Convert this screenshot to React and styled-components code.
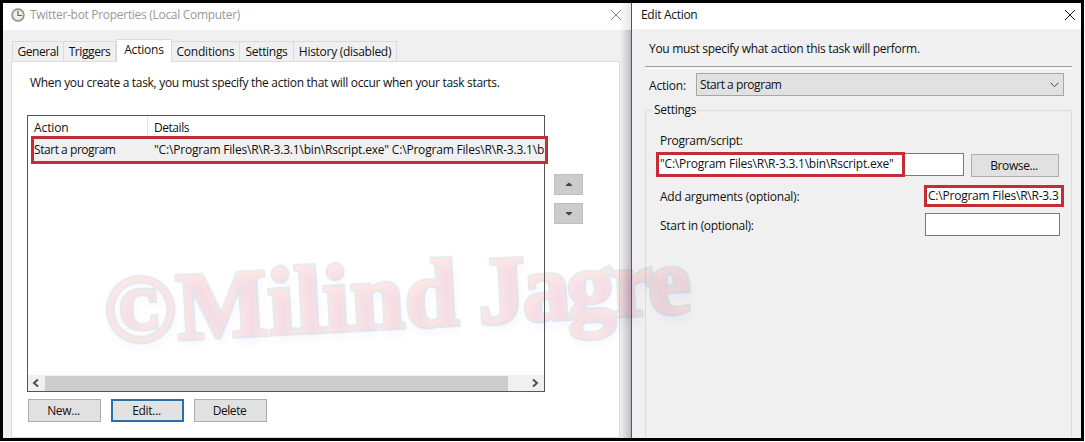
import React from "react";
import styled, { createGlobalStyle } from "styled-components";

const Global = createGlobalStyle`
  * { box-sizing: border-box; }
  body { margin: 0; background: #fff; overflow: hidden; }
`;

const Frame = styled.div`
  position: relative;
  display: flex;
  width: 1084px;
  height: 441px;
  border: 3px solid #000;
  background: #f0f0f0;
  font: 12px/16px "Open Sans", "Noto Sans", sans-serif;
  color: #111;
  overflow: hidden;
`;

const Text = styled.span`
  white-space: pre;
  letter-spacing: ${(p) => p.$track || -0.3}px;
  color: ${(p) => p.$color || "inherit"};
`;

const PropertiesWindow = styled.section`
  width: 628px;
  display: flex;
  flex-direction: column;
  background: linear-gradient(90deg, #f0f0f0 617px, #e4e4e5 620px, #bdbbc0 628px);
`;

const TitleBar = styled.header`
  display: flex;
  align-items: center;
  flex: none;
  height: ${(p) => p.$height}px;
  padding: ${(p) => p.$padding};
  background: ${(p) => p.$background || "#fff"};
  svg:last-child { margin-left: auto; }
`;

const ClockSvg = styled.svg`
  margin-right: 5px;
`;

const TabStrip = styled.nav`
  display: flex;
  align-items: flex-end;
  height: 31px;
  padding-left: 9px;
`;

const Tab = styled.div`
  display: flex;
  justify-content: center;
  align-items: center;
  width: ${(p) => p.$width}px;
  height: ${(p) => (p.$active ? 23 : 20)}px;
  margin-bottom: ${(p) => (p.$active ? -1 : 0)}px;
  padding-bottom: ${(p) => (p.$active ? 2 : 0)}px;
  padding-top: ${(p) => (p.$active ? 0 : 1)}px;
  border: 1px solid #dadada;
  border-left-width: ${(p) => (p.$first || p.$active ? 1 : 0)}px;
  border-bottom: 0;
  background: ${(p) => (p.$active ? "#fff" : "#f0f0f0")};
  z-index: ${(p) => (p.$active ? 1 : 0)};
`;

const TabPage = styled.main`
  display: flex;
  flex: none;
  flex-direction: column;
  width: 609px;
  height: 377px;
  margin-left: 8px;
  padding: 13px 0 0 16px;
  border: 1px solid #dcdcdc;
  background: #fff;
`;

const Intro = styled.p`
  margin: 0 0 24px;
  padding-left: 2px;
  height: 16px;
`;

const ListArea = styled.div`
  display: flex;
  gap: 9px;
  margin-left: -1px;
`;

const ListBox = styled.div`
  display: flex;
  flex-direction: column;
  width: 518px;
  height: 277px;
  border: 1px solid #55555a;
`;

const HeaderRow = styled.div`
  display: flex;
  height: 20px;
  padding-left: 6px;
  line-height: 24px;
`;

const HeaderCell = styled.div`
  width: ${(p) => p.$width}px;
  border-right: ${(p) => (p.$divided ? "1px solid #e2e2e2" : "0")};
  padding-left: ${(p) => p.$pad || 0}px;
`;

const ListRow = styled.div`
  display: flex;
  flex: none;
  align-items: center;
  width: 517px;
  height: 28px;
  margin-left: 3px;
  border: 3px solid #c42d36;
  background: #f0f0f0;
  overflow: hidden;
`;

const RowCell = styled.div`
  flex: none;
  width: ${(p) => p.$width}px;
  overflow: hidden;
  height: 18px;
  line-height: 18px;
`;

const ScrollBar = styled.div`
  display: flex;
  align-items: center;
  justify-content: space-between;
  height: 16px;
  margin-top: auto;
  padding: 0 5px 0 4px;
  background: #f0f0f0;
`;

const Thumb = styled.div`
  width: 463px;
  height: 15px;
  margin-left: -6px;
  background: #cdcdcd;
  & + svg { margin-left: 12px; }
`;

const MoveButtons = styled.div`
  display: flex;
  flex-direction: column;
  gap: 8px;
  padding-top: 59px;
`;

const MoveButton = styled.div`
  display: flex;
  align-items: center;
  justify-content: center;
  width: 29px;
  height: 21px;
  border: 1px solid #bfbfbf;
  background: #ccc;
`;

const ButtonRow = styled.div`
  display: flex;
  gap: 10px;
  padding-top: 7px;
`;

const Button = styled.div`
  display: flex;
  flex: none;
  align-items: center;
  justify-content: center;
  width: ${(p) => p.$width || 73}px;
  height: 23px;
  padding: 1px 2px 0 0;
  border: ${(p) => (p.$focus ? "2px solid #2a6fa8" : "1px solid #adadad")};
  box-shadow: ${(p) => (p.$focus ? "inset 0 0 0 1px #d0ecfa" : "none")};
  background: #e1e1e1;
`;

const EditWindow = styled.section`
  display: flex;
  flex-direction: column;
  flex: 1;
  border-left: 1px solid #64496b;
  box-shadow: inset 2px 0 0 #f8e8f9;
`;

const EditBody = styled.div`
  display: flex;
  flex-direction: column;
  flex: 1;
  padding: 12px 9px 0 13px;
`;

const Prompt = styled.p`
  margin: 0;
  height: 25px;
  padding-left: 4px;
`;

const Rule = styled.div`
  height: 3px;
  border-top: 1px solid #a0a0a0;
  border-bottom: 1px solid #fff;
`;

const ActionRow = styled.div`
  display: flex;
  align-items: center;
  height: 23px;
  margin-top: 4px;
  padding-left: 4px;
`;

const ActionLabel = styled.label`
  width: 47px;
  padding-top: 2px;
`;

const Select = styled.div`
  display: flex;
  align-items: center;
  justify-content: space-between;
  width: 368px;
  height: 23px;
  padding: 1px 4px 0 3px;
  border: 1px solid #a6a6a6;
  background: #e1e1e1;
`;

const Group = styled.fieldset`
  display: flex;
  flex-direction: column;
  flex: 1;
  min-width: 0;
  margin: 6px 0 -4px;
  padding: 0 0 0 10px;
  border: 1px solid #dcdcdc;
  legend { margin-left: -4px; padding: 0 2px; height: 16px; }
`;

const FieldLabel = styled.label`
  height: 16px;
  margin-top: 15px;
  padding-left: 4px;
`;

const ProgramRow = styled.div`
  display: flex;
  align-items: flex-end;
  height: 25px;
  margin-top: 3px;
`;

const Input = styled.div`
  width: ${(p) => p.$width}px;
  height: 23px;
  border: 1px solid #7a7a7a;
  border-left-width: ${(p) => (p.$joined ? 0 : 1)}px;
  margin: ${(p) => (p.$joined ? "0 7px 1px 0" : "0")};
  background: #fff;
`;

const Marked = styled.div`
  display: flex;
  width: ${(p) => p.$width}px;
  height: ${(p) => p.$height}px;
  padding-left: 1px;
  border: 3px solid #c42d36;
  line-height: ${(p) => p.$line}px;
  background: #fff;
  overflow: hidden;
`;

const FieldRow = styled.div`
  display: flex;
  align-items: center;
  justify-content: space-between;
  height: 23px;
  margin-top: ${(p) => p.$top}px;
  padding: 0 ${(p) => p.$right}px 0 4px;
`;

const FieldName = styled.label`
  padding-top: ${(p) => p.$drop}px;
`;

const Watermark = styled.svg`
  position: absolute;
  left: -3px;
  top: -3px;
  pointer-events: none;
`;

const Close = ({ color }) => (
  <svg width="12" height="12" viewBox="0 0 12 12" stroke={color} fill="none">
    <path d="M1 1 11 11M11 1 1 11" />
  </svg>
);

const Clock = () => (
  <ClockSvg width="14" height="14" viewBox="0 0 14 14" fill="none">
    <circle cx="7" cy="7" r="6" fill="#f5f3e4" stroke="#85898b" strokeWidth="1.4" />
    <circle cx="7" cy="7" r="4.5" stroke="#c9cbc5" strokeWidth=".7" />
    <path d="M7 3v4.5h4" stroke="#68634d" strokeWidth="1.2" />
  </ClockSvg>
);

const Chevron = ({ flip }) => (
  <svg width="7" height="10" viewBox="0 0 7 10" fill="none" stroke="#505050" strokeWidth="2">
    <path d={flip ? "M1 1.5 5 5 1 8.5" : "M6 1.5 2 5 6 8.5"} />
  </svg>
);

const Triangle = ({ down }) => (
  <svg width="8" height="5" viewBox="0 0 8 5" fill="#444">
    <path d={down ? "M1 1h6v1L4 4.5 1 2z" : "M4 .5 7 3v1H1V3z"} />
  </svg>
);

const WatermarkText = ({ dx = 0, dy = 0, ...rest }) => (
  <text y={343 + dy} {...rest}>
    <tspan x={106 + dx} textLength="354">©Milind</tspan>
    <tspan x={480 + dx} textLength="213">Jagre</tspan>
  </text>
);

const tabs = [
  ["General", 52, -0.45],
  ["Triggers", 52, -0.4],
  ["Actions", 56, -0.2],
  ["Conditions", 68, -0.2],
  ["Settings", 54, -0.3],
  ["History (disabled)", 103, -0.28],
];

export default function App() {
  return (
    <>
      <Global />
      <Frame>
        <PropertiesWindow>
          <TitleBar $height={27} $padding="0 9px 3px 8px" $background="linear-gradient(90deg, #fff 616px, #e6e5e8 628px)">
            <Clock />
            <Text $color="#999">Twitter-bot Properties (Local Computer)</Text>
            <Close color="#888" />
          </TitleBar>
          <TabStrip>
            {tabs.map(([name, width, track], i) => (
              <Tab key={name} $width={width} $first={i === 0} $active={name === "Actions"}>
                <Text $track={track}>{name}</Text>
              </Tab>
            ))}
          </TabStrip>
          <TabPage>
            <Intro>
              <Text $track={-0.305}>When you create a task, you must specify the action that will occur when your task starts.</Text>
            </Intro>
            <ListArea>
              <ListBox>
                <HeaderRow>
                  <HeaderCell $width={114} $divided><Text $track={-0.1}>Action</Text></HeaderCell>
                  <HeaderCell $width={200} $pad={6}><Text $track={-0.45}>Details</Text></HeaderCell>
                </HeaderRow>
                <ListRow>
                  <RowCell $width={120}><Text $track={-0.45}>Start a program</Text></RowCell>
                  <RowCell $width={391}>
                    <Text $track={-0.19}>{'"C:\\Program Files\\R\\R-3.3.1\\bin\\Rscript.exe" C:\\Program Files\\R\\R-3.3.1\\b'}</Text>
                  </RowCell>
                </ListRow>
                <ScrollBar>
                  <Chevron />
                  <Thumb />
                  <Chevron flip />
                </ScrollBar>
              </ListBox>
              <MoveButtons>
                <MoveButton><Triangle /></MoveButton>
                <MoveButton><Triangle down /></MoveButton>
              </MoveButtons>
            </ListArea>
            <ButtonRow>
              <Button><Text>New...</Text></Button>
              <Button $focus><Text>Edit...</Text></Button>
              <Button><Text $track={-0.45}>Delete</Text></Button>
            </ButtonRow>
          </TabPage>
        </PropertiesWindow>
        <EditWindow>
          <TitleBar $height={26} $padding="0 5px 3px 9px">
            <Text>Edit Action</Text>
            <Close color="#111" />
          </TitleBar>
          <EditBody>
            <Prompt><Text>You must specify what action this task will perform.</Text></Prompt>
            <Rule />
            <ActionRow>
              <ActionLabel><Text $track={-0.2}>Action:</Text></ActionLabel>
              <Select>
                <Text $track={-0.45}>Start a program</Text>
                <svg width="9" height="6" viewBox="0 0 9 6" fill="none" stroke="#444">
                  <path d="M.5 .7 4.5 4.7 8.5 .7" />
                </svg>
              </Select>
            </ActionRow>
            <Group>
              <legend><Text>Settings</Text></legend>
              <FieldLabel><Text>Program/script:</Text></FieldLabel>
              <ProgramRow>
                <Marked $width={249} $height={25} $line={18}>
                  <Text $track={-0.22}>{'"C:\\Program Files\\R\\R-3.3.1\\bin\\Rscript.exe"'}</Text>
                </Marked>
                <Input $width={59} $joined />
                <Button $width={88}><Text $track={-0.4}>Browse...</Text></Button>
              </ProgramRow>
              <FieldRow $top={7} $right={7}>
                <FieldName $drop={3}><Text $track={-0.25}>Add arguments (optional):</Text></FieldName>
                <Marked $width={140} $height={22} $line={15}>
                  <Text $track={-0.22}>{"C:\\Program Files\\R\\R-3.3"}</Text>
                </Marked>
              </FieldRow>
              <FieldRow $top={6} $right={11}>
                <FieldName $drop={2}><Text $track={-0.3}>Start in (optional):</Text></FieldName>
                <Input $width={135} />
              </FieldRow>
            </Group>
          </EditBody>
        </EditWindow>
        <Watermark width="1085" height="442" viewBox="0 0 1085 442">
          <defs>
            <filter id="soft" x="-5%" y="-20%" width="110%" height="150%">
              <feGaussianBlur stdDeviation="4" />
            </filter>
          </defs>
          <g
            transform="rotate(-3 105 346)"
            fontFamily="Liberation Serif, serif"
            fontWeight="700"
            fontSize="96"
            strokeLinejoin="miter"
          >
            <WatermarkText dx={2} dy={6} fill="#4040ff" opacity=".06" filter="url(#soft)" />
            <WatermarkText fill="#ff3020" stroke="#4a5555" strokeWidth="5" paintOrder="stroke" opacity=".11" />
          </g>
        </Watermark>
      </Frame>
    </>
  );
}
